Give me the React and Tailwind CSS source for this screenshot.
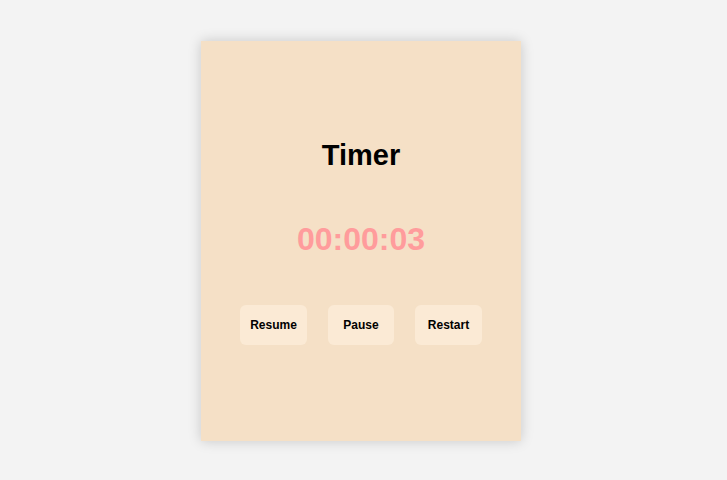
export default function App() {
  return (
    <div className="min-h-screen bg-[#f3f3f3] flex items-center justify-center font-['Liberation_Sans',Arial,sans-serif]">
      <div className="w-[320px] h-[400px] mr-[5px] mt-[2px] bg-[#f5e0c6] shadow-[0_0_12px_rgba(0,0,0,0.18)] flex flex-col items-center justify-center">
        <h1 className="text-[29px] leading-[36px] font-bold text-black">Timer</h1>
        <div className="mt-[46px] text-[32px] leading-[40px] font-bold text-[#ff9c9c]">00:00:03</div>
        <div className="mt-[46px] flex gap-[21px]">
          <button className="w-[67px] h-10 rounded-md bg-[#fbead5] text-[12px] font-bold text-black">Resume</button>
          <button className="w-[66px] h-10 rounded-md bg-[#fbead5] text-[12px] font-bold text-black">Pause</button>
          <button className="w-[67px] h-10 rounded-md bg-[#fbead5] text-[12px] font-bold text-black">Restart</button>
        </div>
      </div>
    </div>
  );
}
